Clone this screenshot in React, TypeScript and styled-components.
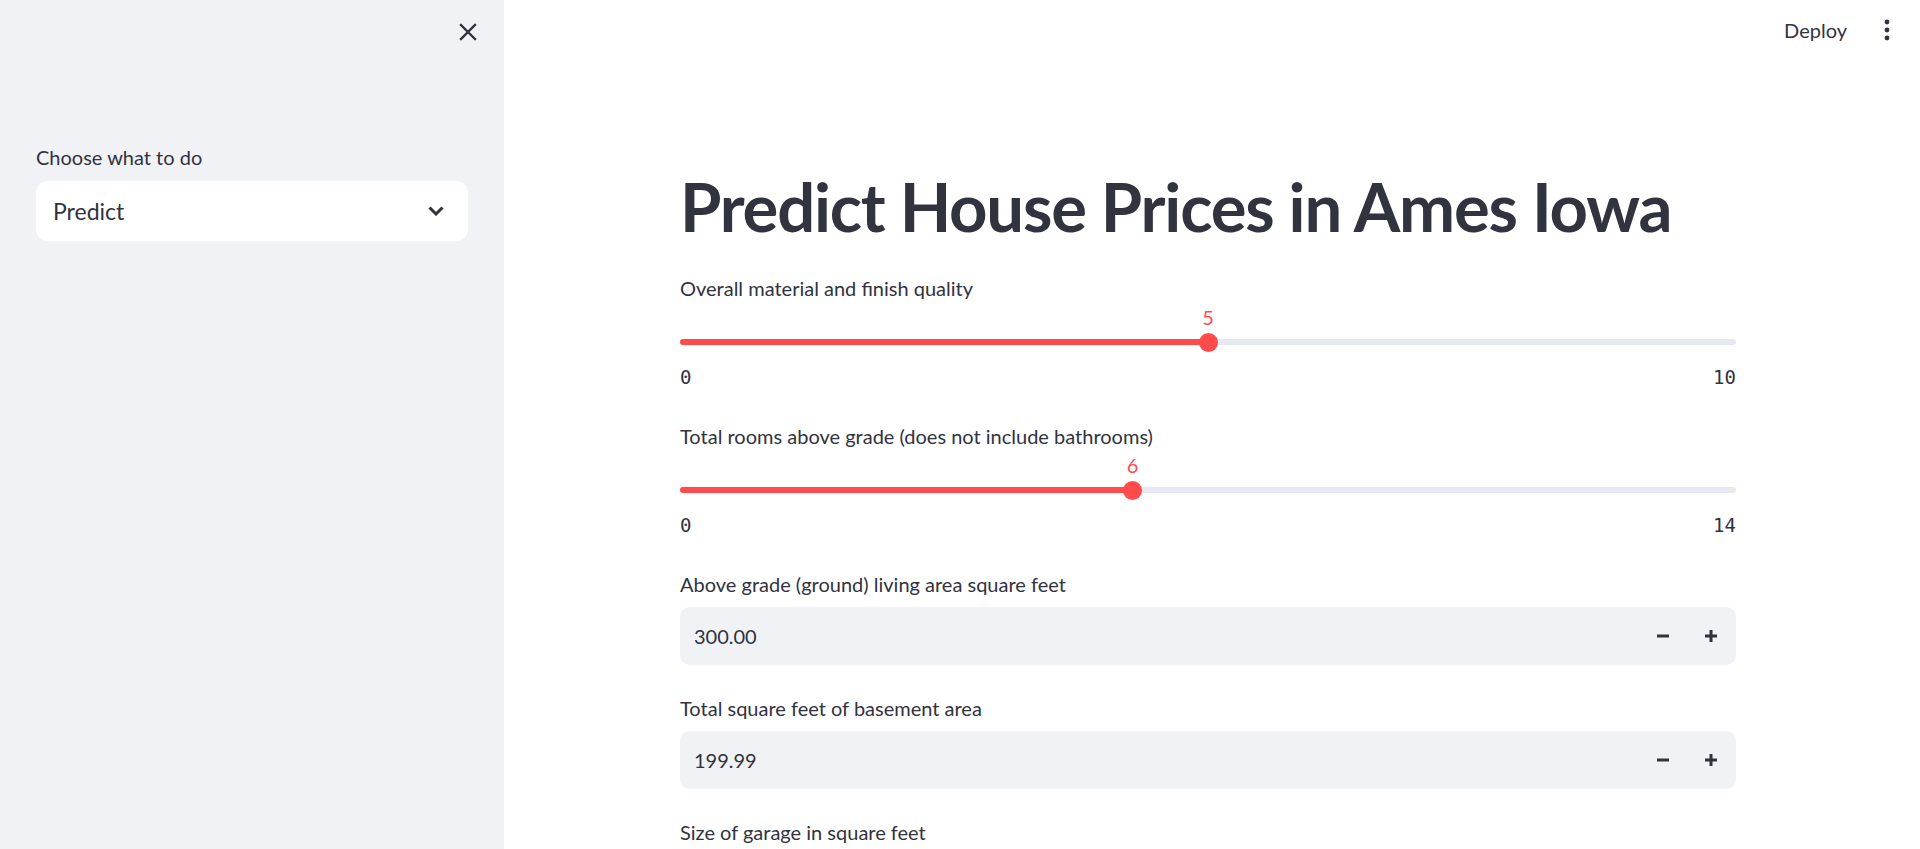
import React from "react";
import styled, { createGlobalStyle } from "styled-components";

const GlobalStyle = createGlobalStyle`
  html, body {
    margin: 0;
    padding: 0;
    background: #ffffff;
  }
  body {
    font-family: Lato, "Noto Sans", sans-serif;
    color: #31333f;
    overflow: hidden;
  }
  * { box-sizing: border-box; }
`;

const Page = styled.div`
  display: flex;
  width: 1920px;
  height: 849px;
  overflow: hidden;
`;

const Sidebar = styled.aside`
  width: 504px;
  flex: none;
  background: #f0f2f6;
  display: flex;
  flex-direction: column;
  padding: 0 36px;
`;

const SidebarTop = styled.div`
  height: 64px;
  display: flex;
  align-items: center;
  justify-content: flex-end;
  margin-right: -9px;
`;

const IconButton = styled.button`
  border: none;
  background: transparent;
  padding: 0;
  display: flex;
  align-items: center;
  justify-content: center;
  color: #31333f;
  cursor: pointer;
`;

const Label = styled.div`
  height: 30px;
  line-height: 30px;
  font-size: 20px;
  color: #31333f;
  white-space: nowrap;
`;

const SidebarLabel = styled(Label)`
  margin-top: 78px;
`;

const SelectBox = styled.div`
  margin-top: 9px;
  height: 60px;
  background: #ffffff;
  border-radius: 12px;
  display: flex;
  align-items: center;
  justify-content: space-between;
  padding: 0 24px 0 17px;
  font-size: 23px;
  color: #31333f;
`;

const Main = styled.main`
  flex: 1;
  display: flex;
  flex-direction: column;
  min-width: 0;
`;

const Header = styled.header`
  height: 60px;
  flex: none;
  display: flex;
  align-items: center;
  justify-content: flex-end;
  gap: 37px;
  padding-right: 30px;
`;

const DeployButton = styled.button`
  border: none;
  background: transparent;
  font-family: Lato, "Noto Sans", sans-serif;
  font-size: 20px;
  color: #31333f;
  padding: 0;
  cursor: pointer;
`;

const Content = styled.div`
  width: 1056px;
  margin-left: 176px;
  padding-top: 105px;
  display: flex;
  flex-direction: column;
`;

const Title = styled.h1`
  margin: 0 0 26px 0;
  font-size: 67px;
  line-height: 82px;
  font-weight: 700;
  color: #31333f;
  letter-spacing: -1.2px;
  white-space: nowrap;
`;

const Widget = styled.section<{ $gap: number }>`
  display: flex;
  flex-direction: column;
  margin-bottom: ${(p) => p.$gap}px;
`;

const Rail = styled.div`
  position: relative;
  margin-top: 27px;
  height: 24px;
  display: flex;
  align-items: center;
`;

const Track = styled.div`
  width: 100%;
  height: 6px;
  border-radius: 3px;
  background: #e6e9ef;
  overflow: hidden;
  display: flex;
`;

const Fill = styled.div`
  height: 100%;
  background: #ff4b4b;
`;

const Thumb = styled.div`
  position: absolute;
  top: 50%;
  width: 19px;
  height: 19px;
  margin-left: -9.5px;
  margin-top: -9.5px;
  border-radius: 50%;
  background: #ff4b4b;
`;

const ThumbValue = styled.div`
  position: absolute;
  bottom: 22px;
  left: 50%;
  transform: translateX(-50%);
  font-size: 20px;
  line-height: 26px;
  color: #ff4b4b;
  white-space: nowrap;
`;

const TickRow = styled.div`
  margin-top: 8px;
  height: 30px;
  display: flex;
  align-items: center;
  justify-content: space-between;
  font-family: "DejaVu Sans Mono", "Liberation Mono", monospace;
  font-size: 19px;
  color: #31333f;
`;

const NumberBox = styled.div`
  margin-top: 8px;
  height: 58px;
  background: #f0f2f6;
  border-radius: 10px;
  display: flex;
  align-items: center;
  padding-right: 1px;
`;

const NumberValue = styled.div`
  flex: 1;
  padding-left: 14px;
  font-size: 20px;
  color: #31333f;
`;

const StepButton = styled.button`
  width: 48px;
  height: 58px;
  border: none;
  background: transparent;
  padding: 0;
  display: flex;
  align-items: center;
  justify-content: center;
  color: #31333f;
  cursor: pointer;
`;

const CloseIcon = () => (
  <svg width="18" height="18" viewBox="0 0 18 18">
    <path d="M2 2 L16 16 M16 2 L2 16" stroke="#31333f" strokeWidth="2.4" strokeLinecap="square" fill="none" />
  </svg>
);

const Chevron = () => (
  <svg width="16" height="10" viewBox="0 0 16 10">
    <path d="M1.5 1.5 L8 8 L14.5 1.5" stroke="#31333f" strokeWidth="3" fill="none" />
  </svg>
);

const Kebab = () => (
  <svg width="6" height="22" viewBox="0 0 6 22">
    <circle cx="3" cy="3" r="2.4" fill="#31333f" />
    <circle cx="3" cy="11" r="2.4" fill="#31333f" />
    <circle cx="3" cy="19" r="2.4" fill="#31333f" />
  </svg>
);

const Minus = () => (
  <svg width="12" height="12" viewBox="0 0 12 12">
    <rect x="0" y="4.5" width="12" height="3" fill="#31333f" />
  </svg>
);

const Plus = () => (
  <svg width="12" height="12" viewBox="0 0 12 12">
    <rect x="0" y="4.5" width="12" height="3" fill="#31333f" />
    <rect x="4.5" y="0" width="3" height="12" fill="#31333f" />
  </svg>
);

type SliderProps = { label: string; value: number; min: number; max: number };

const Slider = ({ label, value, min, max }: SliderProps) => {
  const pct = ((value - min) / (max - min)) * 100;
  return (
    <Widget $gap={29}>
      <Label>{label}</Label>
      <Rail>
        <Track>
          <Fill style={{ width: `${pct}%` }} />
        </Track>
        <Thumb style={{ left: `${pct}%` }}>
          <ThumbValue>{value}</ThumbValue>
        </Thumb>
      </Rail>
      <TickRow>
        <span>{min}</span>
        <span>{max}</span>
      </TickRow>
    </Widget>
  );
};

const NumberInput = ({ label, value }: { label: string; value: string }) => (
  <Widget $gap={28}>
    <Label>{label}</Label>
    <NumberBox>
      <NumberValue>{value}</NumberValue>
      <StepButton aria-label="decrement"><Minus /></StepButton>
      <StepButton aria-label="increment"><Plus /></StepButton>
    </NumberBox>
  </Widget>
);

export default function App() {
  return (
    <>
      <GlobalStyle />
      <Page>
        <Sidebar>
          <SidebarTop>
            <IconButton aria-label="close"><CloseIcon /></IconButton>
          </SidebarTop>
          <SidebarLabel>Choose what to do</SidebarLabel>
          <SelectBox>
            <span>Predict</span>
            <Chevron />
          </SelectBox>
        </Sidebar>
        <Main>
          <Header>
            <DeployButton>Deploy</DeployButton>
            <IconButton aria-label="menu"><Kebab /></IconButton>
          </Header>
          <Content>
            <Title>Predict House Prices in Ames Iowa</Title>
            <Slider label="Overall material and finish quality" value={5} min={0} max={10} />
            <Slider label="Total rooms above grade (does not include bathrooms)" value={6} min={0} max={14} />
            <NumberInput label="Above grade (ground) living area square feet" value="300.00" />
            <NumberInput label="Total square feet of basement area" value="199.99" />
            <Widget $gap={0}>
              <Label>Size of garage in square feet</Label>
            </Widget>
          </Content>
        </Main>
      </Page>
    </>
  );
}
